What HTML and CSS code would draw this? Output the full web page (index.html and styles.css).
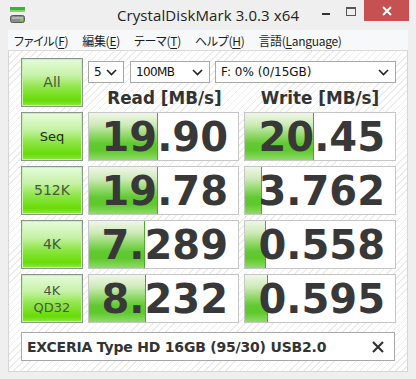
FILE: index.html
```html
<!DOCTYPE html>
<html>
<head>
<meta charset="utf-8">
<link rel="stylesheet" href="styles.css">
</head>
<body>
<div class="window">
  <div class="titlebar">
    <svg class="appicon" width="16" height="17" viewBox="0 0 16 17">
      <rect x="0" y="0" width="15" height="3" fill="#3cb043"/>
      <rect x="0" y="3" width="15" height="2" fill="#7ed957"/>
      <rect x="0.5" y="8.5" width="14" height="7" rx="2" fill="#8c8c8c" stroke="#5a5a5a"/>
      <rect x="2" y="10" width="11" height="2" fill="#b5b5b5"/>
      <rect x="10" y="12" width="3" height="2" fill="#6fd23a"/>
    </svg>
    <div class="title">CrystalDiskMark 3.0.3 x64</div>
    <div class="controls">
      <span class="min"></span>
      <span class="max"></span>
      <span class="close"><svg width="10" height="10" viewBox="0 0 10 10"><path d="M1 1 L9 9 M9 1 L1 9" stroke="#fff" stroke-width="2"/></svg></span>
    </div>
  </div>
  <div class="menubar">
    <span class="mi">ファイル(<u>F</u>)</span>
    <span class="mi">編集(<u>E</u>)</span>
    <span class="mi">テーマ(<u>T</u>)</span>
    <span class="mi">ヘルプ(<u>H</u>)</span>
    <span class="mi">言語(<u>L</u>anguage)</span>
  </div>
  <div class="client">
    <div class="grid">
      <div class="btn">All</div>
      <div class="top">
        <div class="selects">
          <div class="sel s1"><span>5</span><svg class="chev" width="11" height="7" viewBox="0 0 11 7"><path d="M1 1 L5.5 5.5 L10 1" fill="none" stroke="#222" stroke-width="1.6"/></svg></div>
          <div class="sel s2"><span>100MB</span><svg class="chev" width="11" height="7" viewBox="0 0 11 7"><path d="M1 1 L5.5 5.5 L10 1" fill="none" stroke="#222" stroke-width="1.6"/></svg></div>
          <div class="sel s3"><span>F: 0% (0/15GB)</span><svg class="chev" width="11" height="7" viewBox="0 0 11 7"><path d="M1 1 L5.5 5.5 L10 1" fill="none" stroke="#222" stroke-width="1.6"/></svg></div>
        </div>
        <div class="heads">
          <div>Read [MB/s]</div>
          <div>Write [MB/s]</div>
        </div>
      </div>

      <div class="btn seq">Seq</div>
      <div class="cell"><div class="bar" style="width:68px"></div><span class="num">19.90</span></div>
      <div class="cell"><div class="bar" style="width:68px"></div><span class="num">20.45</span></div>

      <div class="btn">512K</div>
      <div class="cell"><div class="bar" style="width:68px"></div><span class="num">19.78</span></div>
      <div class="cell"><div class="bar" style="width:16px"></div><span class="num">3.762</span></div>

      <div class="btn">4K</div>
      <div class="cell"><div class="bar" style="width:55px"></div><span class="num">7.289</span></div>
      <div class="cell"><div class="bar" style="width:20px"></div><span class="num">0.558</span></div>

      <div class="btn two">4K<br>QD32</div>
      <div class="cell"><div class="bar" style="width:56px"></div><span class="num">8.232</span></div>
      <div class="cell"><div class="bar" style="width:22px"></div><span class="num">0.595</span></div>
    </div>
    <div class="comment">
      <span>EXCERIA Type HD 16GB (95/30) USB2.0</span>
      <svg class="x" width="12" height="12" viewBox="0 0 12 12"><path d="M1 1 L11 11 M11 1 L1 11" stroke="#333" stroke-width="2.2"/></svg>
    </div>
  </div>
</div>
</body>
</html>
```

FILE: styles.css
```css
html, body {
  margin: 0;
  padding: 0;
  background: #f0f0f0;
}
.window {
  width: 416px;
  height: 379px;
  background: #efefef;
  box-sizing: border-box;
  overflow: hidden;
  position: relative;
}
.titlebar {
  height: 30px;
  display: flex;
  align-items: flex-start;
  position: relative;
}
.appicon {
  margin: 7px 0 0 10px;
}
.title {
  position: absolute;
  left: 0;
  right: 0;
  top: 5px;
  text-align: center;
  font-family: "Open Sans", "Noto Sans", sans-serif;
  font-size: 15px;
  color: #222;
  letter-spacing: 0.1px;
  pointer-events: none;
}
.controls {
  margin-left: auto;
  margin-right: 7px;
  display: flex;
  align-items: flex-start;
}
.min {
  width: 8px;
  height: 2px;
  background: #333;
  margin: 13px 16px 0 0;
}
.max {
  width: 8px;
  height: 6px;
  border: 1px solid #555;
  border-top-width: 2px;
  margin: 7px 8px 0 0;
}
.close {
  width: 45px;
  height: 21px;
  background: #c75050;
  display: flex;
  align-items: center;
  justify-content: center;
}
.menubar {
  margin: 0 8px;
  height: 21px;
  background: #f7f8f9;
  border-bottom: 1px solid #dadada;
  display: flex;
  align-items: center;
  font-family: "Noto Sans CJK JP", "Noto Sans", sans-serif;
  font-feature-settings: "palt";
  font-size: 12px;
  letter-spacing: -0.3px;
  color: #1e1e1e;
  padding-left: 6px;
  gap: 14px;
  box-sizing: border-box;
}
.mi u {
  text-decoration-thickness: 1px;
  text-underline-offset: 2px;
}
.client {
  margin: 0 8px;
  height: 321px;
  box-sizing: border-box;
  border: 1px solid #d6d6d6;
  border-top: none;
  background-color: #fff;
  background-image: repeating-linear-gradient(135deg, #fff 0 4px, #ececec 4px 5px);
  padding: 7px 12px 0 12px;
}
.grid {
  display: grid;
  grid-template-columns: 62px 151px 152px;
  grid-template-rows: repeat(5, 49px);
  column-gap: 5px;
  row-gap: 5px;
}
.btn {
  box-sizing: border-box;
  border: 1px solid #8a968a;
  box-shadow: inset 0 0 0 1px #c8f0b0;
  background: linear-gradient(to bottom, #e6fbdc 0%, #c6f2a6 35%, #8fe64a 60%, #68dc06 88%, #8ee84a 100%);
  display: flex;
  align-items: center;
  justify-content: center;
  text-align: center;
  font-family: "DejaVu Sans", Verdana, sans-serif;
  font-size: 14px;
  color: #4a5646;
  line-height: 17px;
}
.btn.seq {
  font-size: 13px;
  color: #1f2a1a;
}
.btn.two {
  font-size: 13px;
  line-height: 17px;
}
.top {
  grid-column: 2 / 4;
  display: flex;
  flex-direction: column;
}
.selects {
  display: flex;
  margin-top: 3px;
  height: 22px;
}
.sel {
  box-sizing: border-box;
  height: 22px;
  background: #fff;
  border: 1px solid #a8a8a8;
  display: flex;
  align-items: center;
  justify-content: space-between;
  padding: 0 6px 0 5px;
  font-family: "DejaVu Sans", Tahoma, sans-serif;
  font-size: 12px;
  color: #111;
}
.s1 { width: 36px; margin-right: 6px; }
.s2 { width: 80px; margin-right: 5px; letter-spacing: -0.6px; }
.s3 { width: 181px; }
.heads {
  display: grid;
  grid-template-columns: 151px 152px;
  column-gap: 5px;
  margin-top: 5px;
  font-family: "DejaVu Sans", Verdana, sans-serif;
  font-weight: bold;
  font-size: 16.8px;
  color: #333;
  text-align: center;
  line-height: 20px;
}
.heads div:first-child { padding-left: 2px; }
.cell {
  position: relative;
  box-sizing: border-box;
  background: #fff;
  border: 1px solid #c6c6c6;
  display: flex;
  align-items: center;
  justify-content: flex-end;
  padding-right: 10px;
}
.bar {
  position: absolute;
  left: 0;
  top: 0;
  bottom: 0;
  background: linear-gradient(to bottom, #eef7e8 0%, #cfeab8 25%, #8fd867 48%, #62c932 65%, #5fc82c 80%, #8fdc6a 100%);
  border-right: 1px solid #4ea82a;
}
.num {
  position: relative;
  font-family: "DejaVu Sans", Verdana, sans-serif;
  font-weight: bold;
  font-size: 40px;
  color: #383838;
  line-height: 1;
  margin-top: 1px;
}
.comment {
  margin-top: 9px;
  height: 29px;
  box-sizing: border-box;
  background: #fff;
  border: 1px solid #a9a9a9;
  display: flex;
  align-items: center;
  justify-content: space-between;
  padding: 0 10px 0 5px;
  font-family: "DejaVu Sans", Tahoma, sans-serif;
  font-weight: bold;
  font-size: 14px;
  color: #333;
  letter-spacing: -0.2px;
}
.x { margin-top: 1px; }
```
